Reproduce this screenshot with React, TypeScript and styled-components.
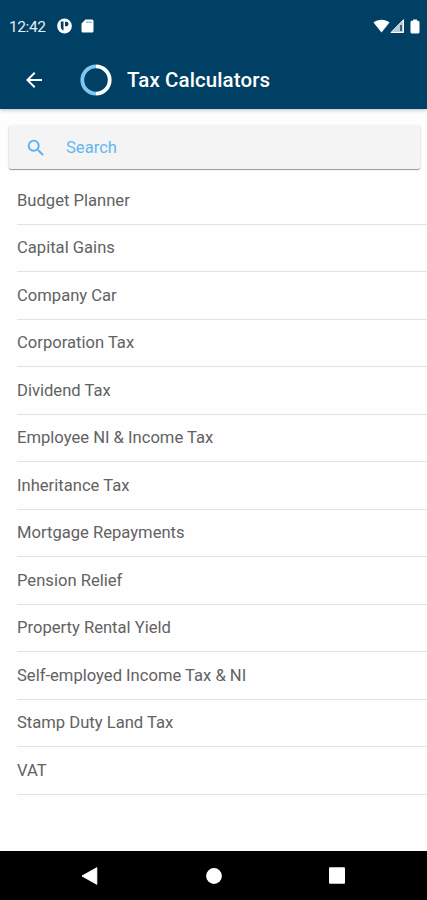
import React from 'react';
import styled, { createGlobalStyle } from 'styled-components';

const GlobalStyle = createGlobalStyle`
  * { box-sizing: border-box; }
  html, body { margin: 0; background: #fff; }
  body { font-family: Roboto, "Noto Sans", sans-serif; }
`;

const Screen = styled.div`
  display: flex;
  flex-direction: column;
  width: 427px;
  height: 900px;
  overflow: hidden;
  background: #fefefe;
`;

const Header = styled.header`
  height: 109px;
  flex: none;
  background: #004064;
  color: #fff;
  box-shadow: 0 1px 4px rgba(20, 32, 56, 0.3);
`;

const StatusBar = styled.div`
  display: flex;
  align-items: center;
  height: 52px;
  padding: 0 7px 0 9px;
`;

const Clock = styled.span`
  width: 48px;
  font-size: 15.5px;
  line-height: 20px;
  letter-spacing: -0.4px;
  padding-top: 1px;
  color: #e6eff5;
`;

const StatusIcons = styled.div<{ $end?: boolean }>`
  display: flex;
  align-items: center;
  margin-left: ${(p) => (p.$end ? 'auto' : '0')};
`;

const Icon = styled.svg<{ $gap?: number }>`
  display: block;
  flex: none;
  margin-left: ${(p) => p.$gap ?? 0}px;
`;

const TitleBar = styled.div`
  display: flex;
  align-items: center;
  height: 57px;
  padding: 0 0 1px 22px;
`;

const Title = styled.h1`
  margin: 0 0 0 15px;
  font-size: 20.5px;
  font-weight: 500;
  line-height: 24px;
  letter-spacing: 0.1px;
  white-space: nowrap;
`;

const SearchField = styled.label`
  display: flex;
  align-items: center;
  flex: none;
  height: 43px;
  margin: 17px 7px 0 9px;
  padding-left: 16px;
  border-radius: 2px;
  background: #f4f4f4;
  box-shadow: 0 1px 1px rgba(0, 0, 0, 0.38), 0 0 3px rgba(0, 0, 0, 0.12);
`;

const SearchInput = styled.input`
  flex: 1;
  min-width: 0;
  margin-left: 19px;
  padding: 0;
  border: 0;
  outline: 0;
  background: transparent;
  font: 400 16.6px/20px Roboto, sans-serif;
  color: #5eb4f0;
  &::placeholder { color: #64b6f2; opacity: 1; }
`;

const List = styled.ul`
  flex: 1;
  margin: 8px 0 0;
  padding: 0 0 0 17px;
  list-style: none;
`;

const Item = styled.li`
  display: flex;
  align-items: center;
  height: 47.5px;
  padding-top: 0.6px;
  border-bottom: 1px solid #e0e3e3;
  font-size: 16.6px;
  line-height: 20px;
  white-space: nowrap;
  color: #626262;
`;

const NavBar = styled.nav`
  display: flex;
  justify-content: space-between;
  align-items: center;
  flex: none;
  height: 49px;
  padding: 0 82px 0 81px;
  background: #000;
`;

const calculators = [
  'Budget Planner',
  'Capital Gains',
  'Company Car',
  'Corporation Tax',
  'Dividend Tax',
  'Employee NI & Income Tax',
  'Inheritance Tax',
  'Mortgage Repayments',
  'Pension Relief',
  'Property Rental Yield',
  'Self-employed Income Tax & NI',
  'Stamp Duty Land Tax',
  'VAT',
];

export default function App() {
  return (
    <>
      <GlobalStyle />
      <Screen>
        <Header>
          <StatusBar>
            <Clock>12:42</Clock>
            <StatusIcons>
              <Icon width="15" height="16" viewBox="0 0 15 16">
                <circle cx="7.5" cy="8" r="7.4" fill="#fff" />
                <path d="M3.800 3.500h2.700v9C4.800 12 3.800 10.500 3.800 8.500z" fill="#004064" />
                <path d="M8 3.800h1.300a2.200 2.200 0 0 1 0 4.400H8z" fill="#004064" />
              </Icon>
              <Icon $gap={9} width="13" height="14" viewBox="0 0 13 14">
                <path d="M4.500 0.500H11a1.500 1.500 0 0 1 1.500 1.500v10a1.500 1.500 0 0 1-1.500 1.500H2A1.500 1.500 0 0 1 .5 12V4.500z" fill="#fff" />
                <path d="M5 3.200h6" stroke="#8facbf" strokeWidth="1.200" />
              </Icon>
            </StatusIcons>
            <StatusIcons $end>
              <Icon width="17" height="14" viewBox="0 0 17 14">
                <path d="M.5 3.500C5.200-.1 11.800-.1 16.500 3.500L8.500 13.500z" fill="#fff" />
              </Icon>
              <Icon width="15" height="14" viewBox="0 0 15 14">
                <path d="M1 13.500L13.500 .7v12.800z" fill="#b7cbd6" stroke="#fff" />
                <path d="M11 6V12" stroke="#3d6179" strokeWidth="2" />
              </Icon>
              <Icon $gap={5} width="10" height="15" viewBox="0 0 10 15">
                <path d="M3 .5h4v1.300h1.500l1 1V13.500l-1 1h-7l-1-1V2.800l1-1H3z" fill="#fff" />
              </Icon>
            </StatusIcons>
          </StatusBar>
          <TitleBar>
            <Icon width="24" height="24" viewBox="0 0 24 24">
              <path d="M20 11H7.830l5.590-5.590L12 4l-8 8 8 8 1.410-1.410L7.830 13H20z" fill="#fff" />
            </Icon>
            <Icon $gap={34} width="32" height="32" viewBox="0 0 32 32" fill="none" strokeWidth="3.800">
              <path d="M16 2.300a13.700 13.700 0 0 1 0 27.400" stroke="#fff" />
              <path d="M16 29.700a13.700 13.700 0 0 1 0-27.400" stroke="#80c8f4" />
            </Icon>
            <Title>Tax Calculators</Title>
          </TitleBar>
        </Header>
        <SearchField>
          <Icon width="22" height="22" viewBox="0 0 24 24">
            <path fill="#58b0ee" d="M15.500 14h-.79l-.28-.27A6.471 6.471 0 0 0 16 9.500 6.500 6.500 0 1 0 9.500 16c1.610 0 3.090-.59 4.230-1.570l.27.28v.79l5 4.990L20.490 19l-4.990-5zm-6 0C7.010 14 5 11.990 5 9.500S7.010 5 9.500 5 14 7.010 14 9.500 11.990 14 9.500 14z" />
          </Icon>
          <SearchInput placeholder="Search" aria-label="Search" />
        </SearchField>
        <List>
          {calculators.map((name) => (
            <Item key={name}>{name}</Item>
          ))}
        </List>
        <NavBar>
          <Icon width="17" height="18" viewBox="0 0 17 18">
            <path d="M1 9L15.800.700v16.600z" fill="#fff" stroke="#fff" strokeLinejoin="round" />
          </Icon>
          <Icon width="16" height="16" viewBox="0 0 16 16">
            <circle cx="8" cy="8" r="7.900" fill="#fff" />
          </Icon>
          <Icon width="16" height="17" viewBox="0 0 16 17">
            <rect width="16" height="16.500" y=".3" rx="1" fill="#fff" />
          </Icon>
        </NavBar>
      </Screen>
    </>
  );
}
